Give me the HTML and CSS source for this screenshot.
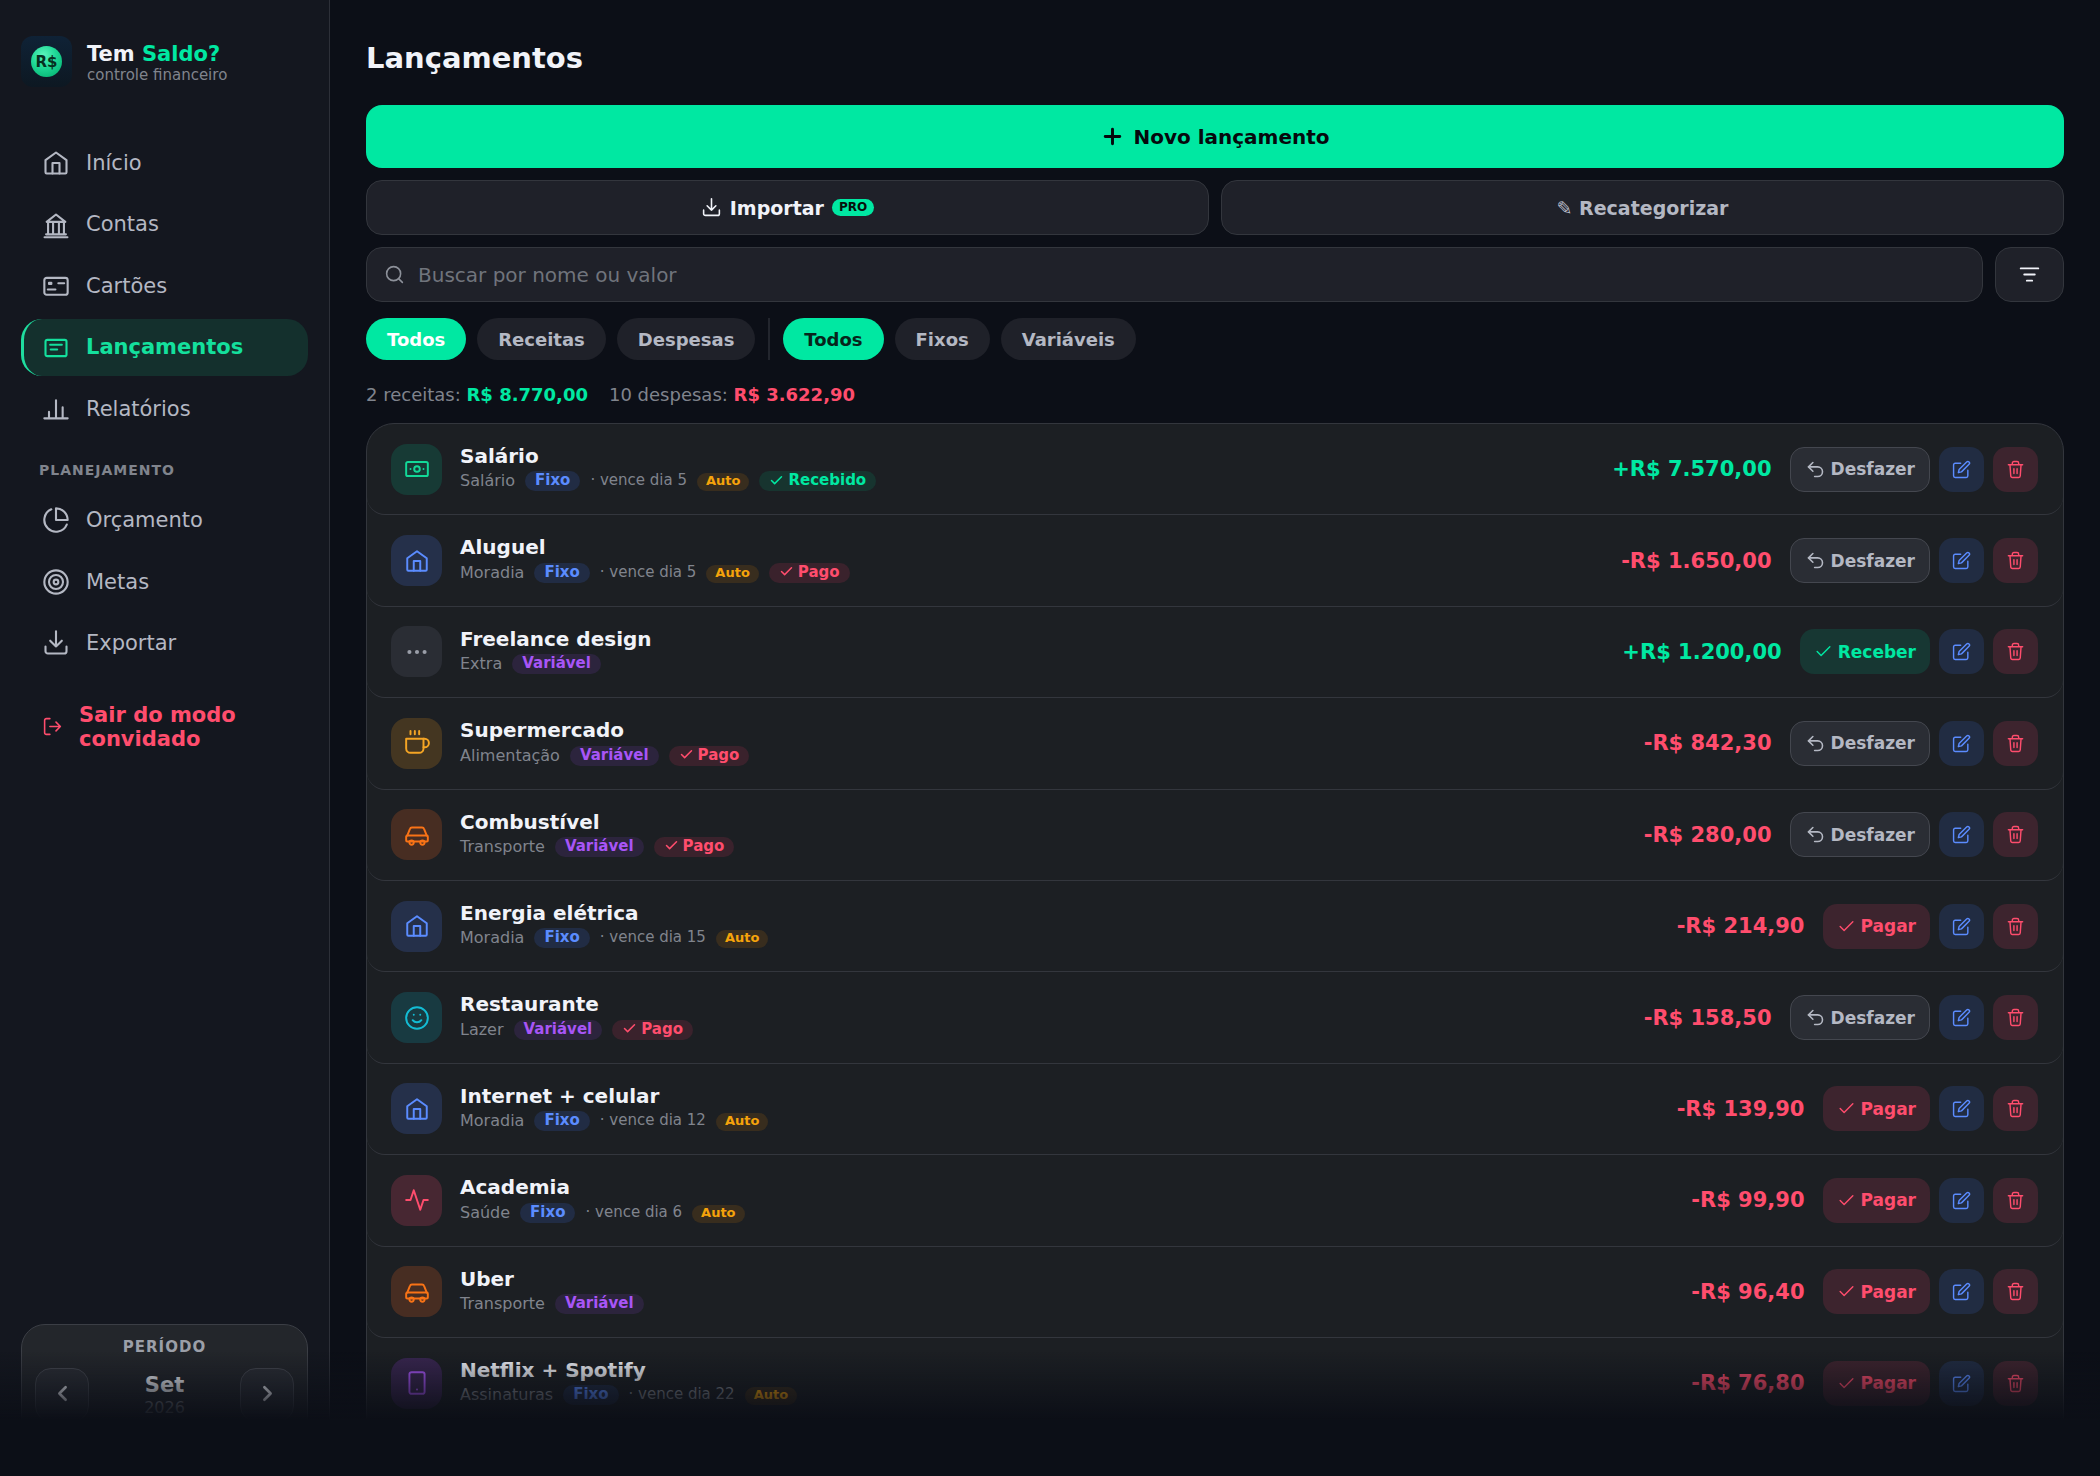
FILE: index.html
```html
<!DOCTYPE html>
<html lang="pt-BR">
<head>
  <meta charset="UTF-8" />
  <meta name="viewport" content="width=device-width, initial-scale=1.0"/>
  <title>Tem Saldo? - Lançamentos</title>
  <link rel="stylesheet" href="styles.css">
</head>
<body>
  <!-- Icons -->
  <svg class="sprite" aria-hidden="true">
    <symbol id="i-home" viewBox="0 0 24 24"><path d="M3 9.500 12 3l9 6.500V20a1 1 0 0 1-1 1H4a1 1 0 0 1-1-1z"/><path d="M9 21v-9h6v9"/></symbol>
    <symbol id="i-bank" viewBox="0 0 24 24"><path d="M12 3 20 9.300H4z"/><path d="M5.200 9.500V20M9.500 9.500V20M14.500 9.500V20M18.800 9.500V20M3.500 20h17M2.200 22.500h19.600"/></symbol>
    <symbol id="i-card" viewBox="0 0 24 24"><rect x="2" y="5" width="20" height="14.500" rx="2"/><path d="M6 9.200h2v1H6zM14 9.700h5M5 15h6.500"/></symbol>
    <symbol id="i-list" viewBox="0 0 24 24"><rect x="3" y="5" width="18" height="14" rx="1.500"/><path d="M7 9.200h10M7.500 13.300H13"/></symbol>
    <symbol id="i-chart" viewBox="0 0 24 24"><path d="M2 20h20M6 20v-5.500M12 20V4.500M17.700 20v-9.500"/></symbol>
    <symbol id="i-pie" viewBox="0 0 24 24"><path d="M21.210 15.890A10 10 0 1 1 8 2.830"/><path d="M22 12A10 10 0 0 0 12 2v10z"/></symbol>
    <symbol id="i-target" viewBox="0 0 24 24"><circle cx="12" cy="12" r="10"/><circle cx="12" cy="12" r="6"/><circle cx="12" cy="12" r="2"/></symbol>
    <symbol id="i-download" viewBox="0 0 24 24"><path d="M21 15v4a2 2 0 0 1-2 2H5a2 2 0 0 1-2-2v-4"/><path d="M7 10l5 5 5-5M12 15V2"/></symbol>
    <symbol id="i-logout" viewBox="0 0 24 24"><path d="M9 21H5a2 2 0 0 1-2-2V5a2 2 0 0 1 2-2h4M16 17l5-5-5-5M21 12H9"/></symbol>
    <symbol id="i-plus" viewBox="0 0 24 24"><path d="M12 5v14M5 12h14"/></symbol>
    <symbol id="i-search" viewBox="0 0 24 24"><circle cx="11" cy="11" r="8"/><path d="m21 21-4.350-4.350"/></symbol>
    <symbol id="i-filter" viewBox="0 0 24 24"><path d="M2 5h20M6 12h12M9 19h6"/></symbol>
    <symbol id="i-cash" viewBox="0 0 24 24"><rect x="2" y="5.500" width="20" height="13" rx="1.500"/><circle cx="12" cy="12" r="2.600"/><path d="M6 12h.01M18 12h.01"/></symbol>
    <symbol id="i-dots" viewBox="0 0 24 24"><circle cx="5" cy="12" r="1"/><circle cx="12" cy="12" r="1"/><circle cx="19" cy="12" r="1"/></symbol>
    <symbol id="i-coffee" viewBox="0 0 24 24"><path d="M18 8h1a4 4 0 0 1 0 8h-1"/><path d="M2 8h16v9a4 4 0 0 1-4 4H6a4 4 0 0 1-4-4z"/><path d="M6 1v3M10 1v3M14 1v3"/></symbol>
    <symbol id="i-car" viewBox="0 0 24 24"><path d="M3 12.500 5.500 6.300A2 2 0 0 1 7.300 5h9.400a2 2 0 0 1 1.800 1.300L21 12.500"/><path d="M3 12.500h18a1 1 0 0 1 1 1V17a1 1 0 0 1-1 1H3a1 1 0 0 1-1-1v-3.500a1 1 0 0 1 1-1z"/><circle cx="7" cy="19" r="2"/><circle cx="17" cy="19" r="2"/></symbol>
    <symbol id="i-smile" viewBox="0 0 24 24"><circle cx="12" cy="12" r="10"/><path d="M8 14s1.500 2 4 2 4-2 4-2M9 9h.01M15 9h.01"/></symbol>
    <symbol id="i-pulse" viewBox="0 0 24 24"><path d="M22 12h-4l-3 9L9 3l-3 9H2"/></symbol>
    <symbol id="i-phone" viewBox="0 0 24 24"><rect x="5" y="2" width="14" height="20" rx="2"/><path d="M12 18h.01"/></symbol>
    <symbol id="i-check" viewBox="0 0 24 24"><path d="M20 6 9 17l-5-5"/></symbol>
    <symbol id="i-undo" viewBox="0 0 24 24"><path d="M9 14 4 9l5-5"/><path d="M4 9h10.500a5.500 5.500 0 0 1 0 11H11"/></symbol>
    <symbol id="i-edit" viewBox="0 0 24 24"><path d="M11 4H4a2 2 0 0 0-2 2v14a2 2 0 0 0 2 2h14a2 2 0 0 0 2-2v-7"/><path d="M18.500 2.500a2.120 2.120 0 0 1 3 3L12 15l-4 1 1-4z"/></symbol>
    <symbol id="i-trash" viewBox="0 0 24 24"><path d="M3 6h18M19 6l-1 14a2 2 0 0 1-2 2H8a2 2 0 0 1-2-2L5 6M10 11v6M14 11v6M8 6V4a2 2 0 0 1 2-2h4a2 2 0 0 1 2 2v2"/></symbol>
    <symbol id="i-left" viewBox="0 0 24 24"><path d="m15 18-6-6 6-6"/></symbol>
    <symbol id="i-right" viewBox="0 0 24 24"><path d="m9 18 6-6-6-6"/></symbol>
  </svg>

  <aside class="sidebar">
    <div class="brand">
      <svg class="brand-logo" viewBox="0 0 51 51" aria-hidden="true">
        <defs>
          <linearGradient id="logoBg" x1="0" y1="0" x2="0" y2="1"><stop offset="0" stop-color="#0f2236"/><stop offset="1" stop-color="#0d1822"/></linearGradient>
          <radialGradient id="logoCoin" cx="0.4" cy="0.3" r="0.8"><stop offset="0" stop-color="#5cf5bd"/><stop offset="0.5" stop-color="#1fd896"/><stop offset="1" stop-color="#06b573"/></radialGradient>
        </defs>
        <rect width="51" height="51" rx="12" fill="url(#logoBg)"/>
        <circle cx="25.500" cy="25.500" r="15.500" fill="url(#logoCoin)"/>
        <text class="brand-coin" x="25.500" y="31" text-anchor="middle">R$</text>
      </svg>
      <div class="brand-text">
        <div class="brand-name">Tem <span>Saldo?</span></div>
        <div class="brand-sub">controle financeiro</div>
      </div>
    </div>

    <nav class="nav">
      <a class="nav-item" href="#inicio"><svg class="icon"><use href="#i-home"/></svg>Início</a>
      <a class="nav-item" href="#contas"><svg class="icon"><use href="#i-bank"/></svg>Contas</a>
      <a class="nav-item" href="#cartoes"><svg class="icon"><use href="#i-card"/></svg>Cartões</a>
      <a class="nav-item active" href="#lancamentos"><svg class="icon"><use href="#i-list"/></svg>Lançamentos</a>
      <a class="nav-item" href="#relatorios"><svg class="icon"><use href="#i-chart"/></svg>Relatórios</a>
      <div class="nav-label">PLANEJAMENTO</div>
      <a class="nav-item" href="#orcamento"><svg class="icon"><use href="#i-pie"/></svg>Orçamento</a>
      <a class="nav-item" href="#metas"><svg class="icon"><use href="#i-target"/></svg>Metas</a>
      <a class="nav-item" href="#exportar"><svg class="icon"><use href="#i-download"/></svg>Exportar</a>
    </nav>
    <button class="logout"><svg class="icon"><use href="#i-logout"/></svg><span>Sair do modo convidado</span></button>

    <div class="period">
      <div class="period-label">PERÍODO</div>
      <div class="period-row">
        <button class="period-btn" aria-label="Mês anterior"><svg class="icon"><use href="#i-left"/></svg></button>
        <div class="period-date"><strong>Set</strong><span>2026</span></div>
        <button class="period-btn" aria-label="Próximo mês"><svg class="icon"><use href="#i-right"/></svg></button>
      </div>
    </div>
  </aside>

  <main class="main">
    <h1>Lançamentos</h1>

    <div class="actions">
      <button class="btn-new"><svg class="icon"><use href="#i-plus"/></svg>Novo lançamento</button>
      <div class="actions-row">
        <button class="btn-tool btn-import"><svg class="icon"><use href="#i-download"/></svg>Importar<span class="pro">PRO</span></button>
        <button class="btn-tool">✎ Recategorizar</button>
      </div>
      <div class="search-row">
        <label class="search">
          <svg class="icon"><use href="#i-search"/></svg>
          <input type="text" placeholder="Buscar por nome ou valor" aria-label="Buscar por nome ou valor" />
        </label>
        <button class="btn-filter" aria-label="Filtros"><svg class="icon"><use href="#i-filter"/></svg></button>
      </div>
    </div>

    <div class="chips">
      <button class="chip on-light">Todos</button>
      <button class="chip">Receitas</button>
      <button class="chip">Despesas</button>
      <span class="chip-divider"></span>
      <button class="chip on-dark">Todos</button>
      <button class="chip">Fixos</button>
      <button class="chip">Variáveis</button>
    </div>

    <div class="summary">
      <span>2 receitas: <strong class="pos">R$ 8.770,00</strong></span>
      <span>10 despesas: <strong class="neg">R$ 3.622,90</strong></span>
    </div>

    <ul class="list">
      <li class="row">
        <span class="cat green"><svg class="icon"><use href="#i-cash"/></svg></span>
        <div class="info">
          <div class="name">Salário</div>
          <div class="meta"><span class="category">Salário</span><span class="tag blue">Fixo</span><span class="due">· vence dia 5</span><span class="tag auto">Auto</span><span class="tag green"><svg class="icon"><use href="#i-check"/></svg>Recebido</span></div>
        </div>
        <div class="amount pos">+R$ 7.570,00</div>
        <div class="row-actions">
          <button class="act undo"><svg class="icon"><use href="#i-undo"/></svg>Desfazer</button>
          <button class="act square blue" aria-label="Editar"><svg class="icon"><use href="#i-edit"/></svg></button>
          <button class="act square red" aria-label="Excluir"><svg class="icon"><use href="#i-trash"/></svg></button>
        </div>
      </li>
      <li class="row">
        <span class="cat blue"><svg class="icon"><use href="#i-home"/></svg></span>
        <div class="info">
          <div class="name">Aluguel</div>
          <div class="meta"><span class="category">Moradia</span><span class="tag blue">Fixo</span><span class="due">· vence dia 5</span><span class="tag auto">Auto</span><span class="tag red"><svg class="icon"><use href="#i-check"/></svg>Pago</span></div>
        </div>
        <div class="amount neg">-R$ 1.650,00</div>
        <div class="row-actions">
          <button class="act undo"><svg class="icon"><use href="#i-undo"/></svg>Desfazer</button>
          <button class="act square blue" aria-label="Editar"><svg class="icon"><use href="#i-edit"/></svg></button>
          <button class="act square red" aria-label="Excluir"><svg class="icon"><use href="#i-trash"/></svg></button>
        </div>
      </li>
      <li class="row">
        <span class="cat gray"><svg class="icon"><use href="#i-dots"/></svg></span>
        <div class="info">
          <div class="name">Freelance design</div>
          <div class="meta"><span class="category">Extra</span><span class="tag purple">Variável</span></div>
        </div>
        <div class="amount pos">+R$ 1.200,00</div>
        <div class="row-actions">
          <button class="act green"><svg class="icon"><use href="#i-check"/></svg>Receber</button>
          <button class="act square blue" aria-label="Editar"><svg class="icon"><use href="#i-edit"/></svg></button>
          <button class="act square red" aria-label="Excluir"><svg class="icon"><use href="#i-trash"/></svg></button>
        </div>
      </li>
      <li class="row">
        <span class="cat amber"><svg class="icon"><use href="#i-coffee"/></svg></span>
        <div class="info">
          <div class="name">Supermercado</div>
          <div class="meta"><span class="category">Alimentação</span><span class="tag purple">Variável</span><span class="tag red"><svg class="icon"><use href="#i-check"/></svg>Pago</span></div>
        </div>
        <div class="amount neg">-R$ 842,30</div>
        <div class="row-actions">
          <button class="act undo"><svg class="icon"><use href="#i-undo"/></svg>Desfazer</button>
          <button class="act square blue" aria-label="Editar"><svg class="icon"><use href="#i-edit"/></svg></button>
          <button class="act square red" aria-label="Excluir"><svg class="icon"><use href="#i-trash"/></svg></button>
        </div>
      </li>
      <li class="row">
        <span class="cat orange"><svg class="icon"><use href="#i-car"/></svg></span>
        <div class="info">
          <div class="name">Combustível</div>
          <div class="meta"><span class="category">Transporte</span><span class="tag purple">Variável</span><span class="tag red"><svg class="icon"><use href="#i-check"/></svg>Pago</span></div>
        </div>
        <div class="amount neg">-R$ 280,00</div>
        <div class="row-actions">
          <button class="act undo"><svg class="icon"><use href="#i-undo"/></svg>Desfazer</button>
          <button class="act square blue" aria-label="Editar"><svg class="icon"><use href="#i-edit"/></svg></button>
          <button class="act square red" aria-label="Excluir"><svg class="icon"><use href="#i-trash"/></svg></button>
        </div>
      </li>
      <li class="row">
        <span class="cat blue"><svg class="icon"><use href="#i-home"/></svg></span>
        <div class="info">
          <div class="name">Energia elétrica</div>
          <div class="meta"><span class="category">Moradia</span><span class="tag blue">Fixo</span><span class="due">· vence dia 15</span><span class="tag auto">Auto</span></div>
        </div>
        <div class="amount neg">-R$ 214,90</div>
        <div class="row-actions">
          <button class="act red"><svg class="icon"><use href="#i-check"/></svg>Pagar</button>
          <button class="act square blue" aria-label="Editar"><svg class="icon"><use href="#i-edit"/></svg></button>
          <button class="act square red" aria-label="Excluir"><svg class="icon"><use href="#i-trash"/></svg></button>
        </div>
      </li>
      <li class="row">
        <span class="cat cyan"><svg class="icon"><use href="#i-smile"/></svg></span>
        <div class="info">
          <div class="name">Restaurante</div>
          <div class="meta"><span class="category">Lazer</span><span class="tag purple">Variável</span><span class="tag red"><svg class="icon"><use href="#i-check"/></svg>Pago</span></div>
        </div>
        <div class="amount neg">-R$ 158,50</div>
        <div class="row-actions">
          <button class="act undo"><svg class="icon"><use href="#i-undo"/></svg>Desfazer</button>
          <button class="act square blue" aria-label="Editar"><svg class="icon"><use href="#i-edit"/></svg></button>
          <button class="act square red" aria-label="Excluir"><svg class="icon"><use href="#i-trash"/></svg></button>
        </div>
      </li>
      <li class="row">
        <span class="cat blue"><svg class="icon"><use href="#i-home"/></svg></span>
        <div class="info">
          <div class="name">Internet + celular</div>
          <div class="meta"><span class="category">Moradia</span><span class="tag blue">Fixo</span><span class="due">· vence dia 12</span><span class="tag auto">Auto</span></div>
        </div>
        <div class="amount neg">-R$ 139,90</div>
        <div class="row-actions">
          <button class="act red"><svg class="icon"><use href="#i-check"/></svg>Pagar</button>
          <button class="act square blue" aria-label="Editar"><svg class="icon"><use href="#i-edit"/></svg></button>
          <button class="act square red" aria-label="Excluir"><svg class="icon"><use href="#i-trash"/></svg></button>
        </div>
      </li>
      <li class="row">
        <span class="cat red"><svg class="icon"><use href="#i-pulse"/></svg></span>
        <div class="info">
          <div class="name">Academia</div>
          <div class="meta"><span class="category">Saúde</span><span class="tag blue">Fixo</span><span class="due">· vence dia 6</span><span class="tag auto">Auto</span></div>
        </div>
        <div class="amount neg">-R$ 99,90</div>
        <div class="row-actions">
          <button class="act red"><svg class="icon"><use href="#i-check"/></svg>Pagar</button>
          <button class="act square blue" aria-label="Editar"><svg class="icon"><use href="#i-edit"/></svg></button>
          <button class="act square red" aria-label="Excluir"><svg class="icon"><use href="#i-trash"/></svg></button>
        </div>
      </li>
      <li class="row">
        <span class="cat orange"><svg class="icon"><use href="#i-car"/></svg></span>
        <div class="info">
          <div class="name">Uber</div>
          <div class="meta"><span class="category">Transporte</span><span class="tag purple">Variável</span></div>
        </div>
        <div class="amount neg">-R$ 96,40</div>
        <div class="row-actions">
          <button class="act red"><svg class="icon"><use href="#i-check"/></svg>Pagar</button>
          <button class="act square blue" aria-label="Editar"><svg class="icon"><use href="#i-edit"/></svg></button>
          <button class="act square red" aria-label="Excluir"><svg class="icon"><use href="#i-trash"/></svg></button>
        </div>
      </li>
      <li class="row">
        <span class="cat purple"><svg class="icon"><use href="#i-phone"/></svg></span>
        <div class="info">
          <div class="name">Netflix + Spotify</div>
          <div class="meta"><span class="category">Assinaturas</span><span class="tag blue">Fixo</span><span class="due">· vence dia 22</span><span class="tag auto">Auto</span></div>
        </div>
        <div class="amount neg">-R$ 76,80</div>
        <div class="row-actions">
          <button class="act red"><svg class="icon"><use href="#i-check"/></svg>Pagar</button>
          <button class="act square blue" aria-label="Editar"><svg class="icon"><use href="#i-edit"/></svg></button>
          <button class="act square red" aria-label="Excluir"><svg class="icon"><use href="#i-trash"/></svg></button>
        </div>
      </li>
    </ul>
  </main>

  <div class="fade"></div>
</body>
</html>
```

FILE: styles.css
```css
:root {
  --bg: #0c0f17;
  --side: #14171f;
  --card: #1c1f23;
  --field: #1f2129;
  --line: #33363d;
  --text: #f1f3f9;
  --soft: #b4b8c3;
  --muted: #80848d;
  --green: #00e8a2;
  --red: #ff4d6d;
  --blue: #5b8cff;
  --purple: #a855f7;
  --amber: #f5a30b;
}

* {
  box-sizing: border-box;
}

body {
  margin: 0;
  height: 100vh;
  overflow: hidden;
  display: flex;
  font-family: "DejaVu Sans", sans-serif;
  background: var(--bg);
  color: var(--text);
}

button, input {
  font-family: inherit;
  color: inherit;
  border: none;
  background: none;
  padding: 0;
  margin: 0;
}

button {
  cursor: pointer;
  font-weight: 700;
}

.sprite {
  display: none;
}

.icon {
  flex: none;
  width: 21px;
  height: 21px;
  fill: none;
  stroke: currentColor;
  stroke-width: 1.8;
  stroke-linecap: round;
  stroke-linejoin: round;
}

.pos { color: var(--green); }
.neg { color: var(--red); }

/* Sidebar */
.sidebar {
  flex: none;
  width: 330px;
  padding: 36px 21px 0;
  display: flex;
  flex-direction: column;
  background: var(--side);
  border-right: 1px solid #2d3038;
}

.brand {
  display: flex;
  gap: 15px;
  margin-bottom: 48px;
}

.brand-logo {
  width: 51px;
  height: 51px;
}

.brand-coin {
  font-size: 15px;
  font-weight: 700;
  fill: #06301f;
}

.brand-text {
  padding-top: 6px;
}

.brand-name {
  font-size: 21px;
  line-height: 24px;
  font-weight: 700;
}

.brand-name span {
  color: var(--green);
}

.brand-sub {
  font-size: 15px;
  line-height: 18px;
  color: var(--muted);
}

.nav {
  display: flex;
  flex-direction: column;
  gap: 5px;
}

.nav-item {
  display: flex;
  align-items: center;
  gap: 16px;
  padding: 13px 18px;
  border-left: 3px solid transparent;
  border-radius: 21px;
  font-size: 21px;
  line-height: 1.45;
  color: var(--soft);
  text-decoration: none;
}

.nav-item .icon {
  width: 28px;
  height: 28px;
}

.nav-item.active {
  background: #14302d;
  border-left-color: #1fdd9f;
  color: #14e09d;
  font-weight: 700;
}

.nav-label {
  padding: 19px 18px 8px;
  font-size: 14px;
  line-height: 18px;
  font-weight: 700;
  letter-spacing: 1px;
  color: var(--muted);
}

.logout {
  display: flex;
  align-items: center;
  gap: 16px;
  margin-top: 18px;
  padding: 13px 21px;
  font-size: 21px;
  line-height: 24px;
  text-align: left;
  color: var(--red);
}

.period {
  flex: none;
  margin-top: auto;
  padding: 13px 13px 14px;
  height: 152px;
  background: #23262b;
  border: 1px solid #3b3e45;
  border-radius: 24px 24px 0 0;
}

.period-label {
  margin-bottom: 12px;
  font-size: 15px;
  line-height: 18px;
  font-weight: 700;
  letter-spacing: 1px;
  text-align: center;
  color: #9b9fa8;
}

.period-row {
  display: flex;
  justify-content: space-between;
  align-items: center;
}

.period-btn {
  width: 54px;
  height: 54px;
  background: #2b2e35;
  border: 1px solid #44474f;
  border-radius: 16px;
}

.period-btn .icon {
  width: 25px;
  height: 25px;
  stroke-width: 2.5;
}

.period-date {
  display: flex;
  flex-direction: column;
  align-items: center;
}

.period-date strong {
  font-size: 21px;
  line-height: 26px;
}

.period-date span {
  font-size: 16px;
  line-height: 20px;
  color: var(--muted);
}

/* Content */
.main {
  flex: 1;
  padding: 40px 36px 0;
}

h1 {
  margin: 0 0 29px;
  font-size: 29px;
  line-height: 36px;
}

.actions {
  display: grid;
  gap: 12px;
}

.btn-new {
  display: flex;
  align-items: center;
  justify-content: center;
  gap: 8px;
  height: 63px;
  border-radius: 16px;
  background: var(--green);
  color: #06090d;
  font-size: 20px;
}

.btn-new .icon {
  width: 25px;
  height: 25px;
  stroke-width: 2.8;
}

.actions-row {
  display: grid;
  grid-template-columns: 1fr 1fr;
  gap: 12px;
}

.btn-tool {
  display: flex;
  align-items: center;
  justify-content: center;
  gap: 8px;
  height: 55px;
  border: 1px solid var(--line);
  border-radius: 16px;
  background: var(--field);
  color: var(--soft);
  font-size: 19px;
}

.btn-import {
  color: var(--text);
}

.pro {
  padding: 0 7px;
  border-radius: 9px;
  background: var(--green);
  color: #07110d;
  font-size: 12px;
  line-height: 17px;
}

.search-row {
  display: flex;
  gap: 12px;
}

.search {
  flex: 1;
  display: flex;
  align-items: center;
  gap: 13px;
  height: 55px;
  padding: 0 17px;
  border: 1px solid var(--line);
  border-radius: 16px;
  background: var(--field);
  color: #8d919a;
}

.search input {
  flex: 1;
  font-size: 20px;
  outline: none;
}

.search input::placeholder {
  color: #70747c;
}

.btn-filter {
  width: 69px;
  height: 55px;
  border: 1px solid var(--line);
  border-radius: 16px;
  background: var(--field);
}

.btn-filter .icon {
  stroke-width: 2.2;
  vertical-align: middle;
}

.chips {
  display: flex;
  gap: 11px;
  margin-top: 16px;
}

.chip {
  height: 42px;
  padding: 0 21px;
  border-radius: 21px;
  background: var(--field);
  color: var(--soft);
  font-size: 18px;
}

.chip.on-light {
  background: var(--green);
  color: #fff;
}

.chip.on-dark {
  background: var(--green);
  color: #07251b;
}

.chip-divider {
  width: 2px;
  margin: 0 2px;
  background: #23262e;
}

.summary {
  display: flex;
  gap: 21px;
  margin: 24px 0 17px;
  font-size: 18px;
  line-height: 22px;
  color: var(--muted);
}

.list {
  margin: 0;
  padding: 0;
  list-style: none;
  background: var(--card);
  border: 1px solid var(--line);
  border-radius: 28px 28px 0 0;
}

.row {
  display: flex;
  align-items: center;
  padding: 18px 25px 18px 24px;
  border-bottom: 1px solid var(--line);
  border-radius: 18px;
}

.cat {
  flex: none;
  display: flex;
  align-items: center;
  justify-content: center;
  width: 51px;
  height: 51px;
  margin-right: 18px;
  border-radius: 16px;
}

.cat .icon {
  width: 26px;
  height: 26px;
}

.cat.green { background: #173a35; color: #12d998; }
.cat.blue { background: #25304a; color: var(--blue); }
.cat.gray { background: #2a2d34; color: #9a9ea8; }
.cat.amber { background: #443621; color: #f5a524; }
.cat.orange { background: #472d22; color: #f97316; }
.cat.cyan { background: #183a41; color: #13bcd4; }
.cat.red { background: #472732; color: var(--red); }
.cat.purple { background: #38264f; color: var(--purple); }

.info {
  flex: 1;
}

.name {
  font-size: 20px;
  line-height: 1.47;
  font-weight: 700;
}

.meta {
  display: flex;
  align-items: flex-end;
  gap: 10px;
  padding-bottom: 5px;
}

.category {
  font-size: 16px;
  line-height: 20px;
  color: var(--muted);
}

.due {
  font-size: 15px;
  line-height: 18px;
  padding-bottom: 2px;
  color: var(--muted);
}

.tag {
  display: flex;
  align-items: center;
  gap: 4px;
  padding: 0 10px 2px;
  border-radius: 10px;
  font-size: 15px;
  line-height: 18px;
  font-weight: 700;
}

.tag .icon {
  width: 15px;
  height: 15px;
  stroke-width: 2.4;
}

.tag.blue { background: #212c44; color: var(--blue); }
.tag.purple { background: #2c243d; color: var(--purple); }
.tag.green { background: #17342f; color: var(--green); }
.tag.red { background: #3a222c; color: var(--red); }

.tag.auto {
  padding: 0 9px 2px;
  font-size: 13px;
  line-height: 16px;
  background: #382d1e;
  color: var(--amber);
}

.amount {
  margin-right: 18px;
  font-size: 21px;
  font-weight: 700;
}

.row-actions {
  display: flex;
  gap: 9px;
}

.act {
  display: flex;
  align-items: center;
  justify-content: center;
  gap: 5px;
  height: 45px;
  padding: 0 14px;
  border-radius: 14px;
  font-size: 17px;
}

.act .icon {
  width: 19px;
  height: 19px;
}

.act.square {
  width: 45px;
  padding: 0;
}

.act.undo {
  background: #2a2d34;
  border: 1px solid #44474f;
  color: var(--soft);
}

.act.undo .icon {
  width: 21px;
  height: 21px;
}

.act.green { background: #173733; color: var(--green); }
.act.blue { background: #212c42; color: var(--blue); }
.act.red { background: #3d242e; color: var(--red); }

.fade {
  position: fixed;
  left: 0;
  right: 0;
  bottom: 0;
  height: 124px;
  background: linear-gradient(to bottom, transparent, var(--bg) 55%);
  pointer-events: none;
}
```
